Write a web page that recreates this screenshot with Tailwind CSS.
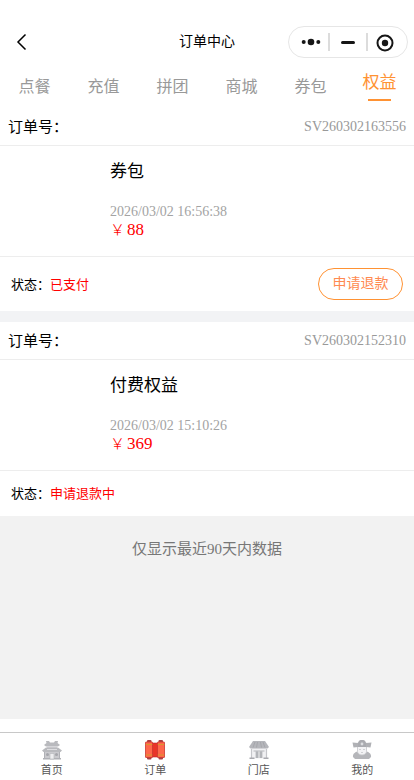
<!DOCTYPE html>
<html lang="zh-CN">
<head>
<meta charset="utf-8">
<meta name="viewport" content="width=device-width, initial-scale=1">
<title>订单中心</title>
<script src="https://cdn.jsdelivr.net/npm/@tailwindcss/browser@4"></script>
</head>
<body class="flex min-h-screen flex-col bg-white font-['Liberation_Serif','Noto_Sans_CJK_SC',serif] text-black">
  <header class="grid h-[70px] grid-cols-[1fr_auto_1fr] items-center px-1.5 pt-3.5">
    <button type="button" aria-label="返回" class="flex size-8 items-center justify-center">
      <svg class="size-5" viewBox="0 0 20 20" fill="none" stroke="#000" stroke-width="1.5"><path d="M13.5 2.5 6 10l7.500 7.500"/></svg>
    </button>
    <h1 class="text-sm leading-5">订单中心</h1>
    <div class="flex h-8 w-[120px] items-center justify-self-end rounded-full border border-[#e6e6e6]">
      <button type="button" aria-label="更多" class="flex flex-1 justify-center pl-1">
        <svg class="h-3 w-5" viewBox="0 0 20 12" fill="#161616"><circle cx="2.700" cy="6" r="2"/><circle cx="10" cy="6" r="3.300"/><circle cx="17.300" cy="6" r="2"/></svg>
      </button>
      <span class="h-[18px] w-0.5 bg-[#dcdcdc]"></span>
      <button type="button" aria-label="最小化" class="flex flex-1 justify-center">
        <span class="h-[3px] w-3.5 rounded-full bg-[#161616]"></span>
      </button>
      <span class="h-[18px] w-0.5 bg-[#dcdcdc]"></span>
      <button type="button" aria-label="关闭" class="flex flex-1 justify-center pt-0.5 pr-1">
        <svg class="size-[18px]" viewBox="0 0 18 18"><circle cx="9" cy="9" r="7.500" fill="none" stroke="#161616" stroke-width="2"/><circle cx="9" cy="9" r="3.200" fill="#161616"/></svg>
      </button>
    </div>
  </header>

  <nav aria-label="订单类型" class="grid h-[38px] grid-cols-6 pt-px text-center text-base leading-6 text-[#999]">
    <a href="#" class="pt-1">点餐</a>
    <a href="#" class="pt-1">充值</a>
    <a href="#" class="pt-1">拼团</a>
    <a href="#" class="pt-1">商城</a>
    <a href="#" class="pt-1">券包</a>
    <a href="#" aria-current="page" class="flex flex-col items-center gap-1 text-[17px] text-[#ff9233]">权益<span class="h-0.5 w-[23px] bg-[#ff9233]"></span></a>
  </nav>

  <main class="flex flex-1 flex-col bg-[#f2f2f2]">
    <article class="bg-white">
      <div class="flex h-[38px] items-center justify-between border-b border-[#ededed] px-2">
        <span class="text-[15px] leading-6">订单号：</span>
        <span class="text-sm text-[#999]">SV260302163556</span>
      </div>
      <div class="h-[111px] border-b border-[#ededed] pt-3.5 pl-[110px]">
        <h2 class="text-[17px] leading-6">券包</h2>
        <p class="mt-[19px] text-sm leading-[18px] text-[#a3a3a3]">2026/03/02 16:56:38</p>
        <p class="flex text-[17px] leading-[18px] text-[#f00]"><span class="w-[17px] text-[15px] leading-[18px] font-light">￥</span>88</p>
      </div>
      <div class="flex h-[54px] items-center justify-between px-[11px]">
        <p class="pt-0.5 text-[13px] leading-5">状态：<span class="text-[#f00]">已支付</span></p>
        <button type="button" class="h-8 w-[85px] rounded-full border border-[#ff9233] text-sm text-[#ff8a50]">申请退款</button>
      </div>
    </article>
    <div class="h-[11px] bg-[#f2f3f5]"></div>
    <article class="bg-white">
      <div class="flex h-[38px] items-center justify-between border-b border-[#ededed] px-2">
        <span class="text-[15px] leading-6">订单号：</span>
        <span class="text-sm text-[#999]">SV260302152310</span>
      </div>
      <div class="h-[111px] border-b border-[#ededed] pt-3.5 pl-[110px]">
        <h2 class="text-[17px] leading-6">付费权益</h2>
        <p class="mt-[19px] text-sm leading-[18px] text-[#a3a3a3]">2026/03/02 15:10:26</p>
        <p class="flex text-[17px] leading-[18px] text-[#f00]"><span class="w-[17px] text-[15px] leading-[18px] font-light">￥</span>369</p>
      </div>
      <div class="flex h-[45px] items-center px-[11px]">
        <p class="text-[13px] leading-5">状态：<span class="text-[#f00]">申请退款中</span></p>
      </div>
    </article>
    <p class="pt-[21px] text-center text-[15px] leading-6 text-[#777]">仅显示最近90天内数据</p>
  </main>

  <footer class="bg-white pt-[13px]">
    <nav aria-label="主导航" class="grid h-12 grid-cols-4 border-t border-[#c8c8c8] pt-1.5 text-[11px] leading-4 text-[#555]">
      <a href="#" class="flex flex-col items-center gap-px">
        <svg class="size-[22px]" viewBox="0 0 22 22">
          <path d="M5 2h3l1 1.500h4L14 2h3l-.5 2 2.500 2-2 1.500H5L3 6l2.500-2z" fill="#b9babe"/>
          <path d="M6 7h10v2H6z" fill="#d6d6da"/>
          <path d="M5 8.500h12l4 3-1.500 1.500h-17L1 11.500z" fill="#b9babe"/>
          <path d="M6 10.500h10" stroke="#dedee1"/>
          <path d="M3 13h16v7H3z" fill="#cacace"/>
          <path d="M2 19h18v1.500H2zM3 13h1v6H3zM18 13h1v6h-1z" fill="#b0b1b6"/>
          <circle cx="6.500" cy="15.500" r="1.500" fill="#a5a6ab"/><circle cx="15.500" cy="15.500" r="1.500" fill="#a5a6ab"/>
          <path d="M9 14.500h4V20H9z" fill="#eeeef0" stroke="#b4b5ba" stroke-width=".6"/>
        </svg>首页</a>
      <a href="#" aria-current="page" class="flex flex-col items-center gap-px">
        <svg class="size-[22px]" viewBox="0 0 22 22">
          <rect x="3" y="1" width="4.500" height="19.500" rx="1" fill="#a94045"/><rect x="14.500" y="1" width="4.500" height="19.500" rx="1" fill="#a94045"/>
          <path d="M8 4h6v14H8z" fill="#e93428" stroke="#b92b2b" stroke-width=".6"/>
          <rect x="1.500" y="3" width="7" height="15.500" rx=".5" fill="#ff674b" stroke="#c93830" stroke-width=".8"/>
          <rect x="13.500" y="3" width="7" height="15.500" rx=".5" fill="#ff674b" stroke="#c93830" stroke-width=".8"/>
          <path d="M1.800 5.500h6.400M13.800 5.500h6.400M1.800 16h6.400M13.800 16h6.400" stroke="#d8992b" stroke-width="1.200"/>
        </svg>订单</a>
      <a href="#" class="flex flex-col items-center gap-px">
        <svg class="size-[22px]" viewBox="0 0 22 22">
          <path d="M3.500 9h15v10.500h-15z" fill="#f1f1f3"/>
          <path d="M5 2h12l4 6-1.500 1.500h-17L1 8z" fill="#b5b6bb"/>
          <path d="M7 3 5 8.500M9.500 3l-1 5.500M12.500 3l1 5.500M15 3l2 5.500" stroke="#9d9fa4" stroke-width=".7"/>
          <path d="M3.500 10v9M18.500 10v9" stroke="#c5c6ca" stroke-width="1.200"/>
          <path d="M1.500 18.500h5V20h-5zM15.500 18.500h5V20h-5z" fill="#a9aaaf"/>
          <path d="M7.500 12.500h7V19h-7z" fill="#c2c3c7"/><path d="M9 12.500V19M13 12.500V19M5.500 12h11" stroke="#999ba1" stroke-width=".7"/><path d="M11 12.500V19" stroke="#eee" stroke-width=".8"/>
        </svg>门店</a>
      <a href="#" class="flex flex-col items-center gap-px">
        <svg class="size-[22px]" viewBox="0 0 22 22">
          <path d="M6.500 12.500h9c3 .8 5 3 4.500 5.500L18 20H4l-2-2c-.5-2.500 1.500-4.700 4.500-5.500z" fill="#b5b6ba"/>
          <path d="M6.500 7.500h9v5c0 2-2 3.500-4.500 3.500s-4.500-1.500-4.500-3.500z" fill="#f3f3f5" stroke="#c5c6ca" stroke-width=".8"/>
          <path d="M7.500 3C7.500 1.500 9 1 11 1s3.500.5 3.500 2L16 4.500V8H6V4.500z" fill="#aaabb0"/>
          <path d="M1.500 3.500 7 4v4l-4.500.5zM20.500 3.500 15 4v4l4.500.5z" fill="#b0b1b5"/>
          <circle cx="11" cy="5" r="1.400" fill="#dcdde0"/>
          <path d="M8 10.500h2M12 10.500h2M10 13.500h2" stroke="#c0c1c5" stroke-width=".7"/>
        </svg>我的</a>
    </nav>
  </footer>
</body>
</html>
